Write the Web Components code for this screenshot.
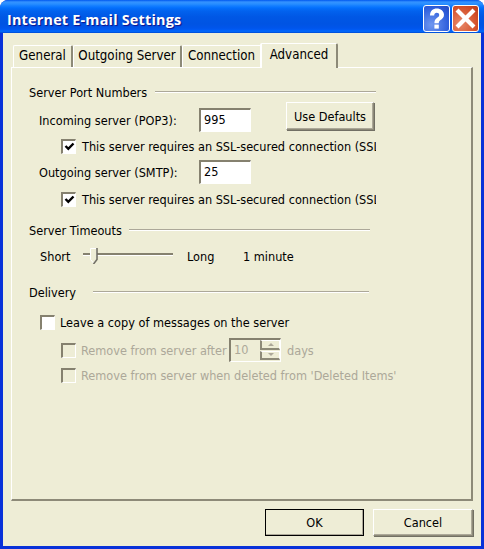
<!DOCTYPE html>
<html>
<head>
<meta charset="utf-8">
<title>Internet E-mail Settings</title>
<style>
html, body { margin: 0; padding: 0; background: #fff; }
body { width: 484px; height: 549px; overflow: hidden; font: 12.6px "DejaVu Sans Condensed", "DejaVu Sans", sans-serif; color: #000; }
.first { margin-top: 16px; }
.second { margin-top: 15px; }
.third { margin-top: 20px; }
</style>
</head>
<body>
<xp-window caption="Internet E-mail Settings">
  <xp-tabs>
    <xp-group class="first" label="Server Port Numbers" line="347" gap="8">
      <xp-row top="8" height="24" indent="10">
        <span style="width:160px">Incoming server (POP3):</span>
        <xp-field value="995" width="52"></xp-field>
        <xp-button label="Use Defaults" width="88" height="28" style="margin:-6px 0 0 35px;align-self:flex-start"></xp-button>
      </xp-row>
      <xp-row top="6" height="16" indent="32" clip="347">
        <xp-check checked></xp-check>
        <span class="long">This server requires an SSL-secured connection (SSL)</span>
      </xp-row>
      <xp-row top="6" height="24" indent="10">
        <span style="width:160px">Outgoing server (SMTP):</span>
        <xp-field value="25" width="52"></xp-field>
      </xp-row>
      <xp-row top="7" height="16" indent="32" clip="347">
        <xp-check checked></xp-check>
        <span class="long">This server requires an SSL-secured connection (SSL)</span>
      </xp-row>
    </xp-group>
    <xp-group class="second" label="Server Timeouts" line="341" gap="7">
      <xp-row top="10" height="16" indent="11">
        <span style="width:43px">Short</span>
        <xp-slider></xp-slider>
        <span style="margin-left:14px;width:56px">Long</span>
        <span>1 minute</span>
      </xp-row>
    </xp-group>
    <xp-group class="third" label="Delivery" line="340" gap="17">
      <xp-row top="14" height="16" indent="11">
        <xp-check></xp-check>
        <span style="margin-left:5px">Leave a copy of messages on the server</span>
      </xp-row>
      <xp-row top="8" height="24" indent="32" muted>
        <xp-check disabled></xp-check>
        <span style="margin-left:5px;width:148px;white-space:nowrap;overflow:hidden">Remove from server after</span>
        <xp-spinner value="10"></xp-spinner>
        <span style="margin-left:6px">days</span>
      </xp-row>
      <xp-row top="5" height="16" indent="32" muted>
        <xp-check disabled></xp-check>
        <span style="margin-left:5px">Remove from server when deleted from 'Deleted Items'</span>
      </xp-row>
    </xp-group>
  </xp-tabs>
  <xp-button slot="actions" label="OK" width="99" height="27" default></xp-button>
  <xp-button slot="actions" label="Cancel" width="100" height="27"></xp-button>
</xp-window>

<script>
class XpWindow extends HTMLElement {
    constructor() {
        super();
        this.shadowDOM = this.attachShadow({mode: "open"});
    }

    connectedCallback() {
        this.shadowDOM.innerHTML = `
        <style>
        :host { display: block; width: 484px; height: 549px; box-sizing: border-box; background: #0831d9; border-radius: 8px 8px 0 0; overflow: hidden; }
        .bar {
            height: 33px; box-sizing: border-box; display: flex; align-items: flex-start; padding: 5px 5px 0 7px;
            background: linear-gradient(to bottom, #0058ee 0, #3593ff 2px, #288eff 4px, #127dff 6px, #036ffc 8px, #0262ee 11px, #0057e5 17px, #0054e3 24px, #0055eb 28px, #005bf5 30px, #026afe 31px, #0062ef 32px, #0043cf 33px);
        }
        h1 { margin: 6px 0 0; flex: 1; font: bold 14.4px/18px "Open Sans", "DejaVu Sans", sans-serif; letter-spacing: .2px; color: #fff; text-shadow: 1px 1px 1px #0f1089; white-space: nowrap; }
        .ctl { width: 27px; height: 27px; box-sizing: border-box; border: 1px solid #fff; border-radius: 3px; display: block; flex: none; }
        .help { background: radial-gradient(circle at 30% 75%, #6f97f0, #2f5fdc 65%, #2348c0); }
        .close { background: radial-gradient(circle at 30% 70%, #e8896a, #d4512b 65%, #b8391a); margin-left: 2px; }
        .body { height: 513px; margin: 0 3px 3px; background: #eeedd6; display: flex; flex-direction: column; box-sizing: border-box; padding: 10px 8px 0 8px; }
        .actions { display: flex; justify-content: flex-end; gap: 9px; margin-top: 8px; }
        </style>
        <div class="bar">
            <h1>${this.getAttribute("caption")}</h1>
            <svg class="ctl help" viewBox="0 0 25 25"><path d="M6 9.500C6 5 9 2.500 12.800 2.500S20 5 20 8.800c0 3-2 4.200-3.500 5.300-1.300 1-1.700 1.700-1.700 3.200h-4.400c0-2.800.8-4 2.500-5.300 1.300-1 2.300-1.600 2.300-3 0-1.400-1-2.300-2.500-2.300s-2.500 1-2.500 2.800Z" fill="#fff"/><rect x="10.400" y="18.600" width="4.400" height="4" fill="#fff"/></svg>
            <svg class="ctl close" viewBox="0 0 25 25"><path d="M5.500 5.500l14 14M19.500 5.500l-14 14" stroke="#fff" stroke-width="4.200" stroke-linecap="square"/></svg>
        </div>
        <div class="body">
            <slot></slot>
            <div class="actions"><slot name="actions"></slot></div>
        </div>`;
    }
}
customElements.define("xp-window", XpWindow);

class XpTabs extends HTMLElement {
    constructor() {
        super();
        this.shadowDOM = this.attachShadow({mode: "open"});
    }

    connectedCallback() {
        const tabs = [["General", 60], ["Outgoing Server", 109], ["Connection", 80]];
        this.shadowDOM.innerHTML = `
        <style>
        :host { display: block; }
        .strip { display: flex; height: 24px; align-items: flex-end; padding-left: 2px; position: relative; z-index: 1; font-size: 13.200px; }
        .tab {
            height: 22px; box-sizing: border-box; text-align: center; line-height: 20px; white-space: nowrap;
            border-top: 1px solid #fff; border-left: 1px solid #fff; border-right: 2px solid #8d8a78; border-radius: 2px 2px 0 0;
        }
        .on { height: 25px; width: 78px; margin-left: -2px; margin-bottom: -1px; line-height: 21px; background: #eeedd6; border-left-width: 2px; }
        .panel {
            height: 434px; box-sizing: border-box; padding-left: 17px; background: #eeedd6;
            border-top: 1px solid #fff; border-left: 1px solid #fff; border-right: 2px solid #8d8a78; border-bottom: 2px solid #8d8a78;
        }
        </style>
        <div class="strip">
            ${tabs.map(t => `<div class="tab" style="width:${t[1]}px">${t[0]}</div>`).join("")}
            <div class="tab on">Advanced</div>
        </div>
        <div class="panel"><slot></slot></div>`;
    }
}
customElements.define("xp-tabs", XpTabs);

class XpGroup extends HTMLElement {
    constructor() {
        super();
        this.shadowDOM = this.attachShadow({mode: "open"});
    }

    connectedCallback() {
        this.shadowDOM.innerHTML = `
        <style>
        :host { display: block; }
        .head { display: flex; align-items: center; height: 16px; width: ${this.getAttribute("line")}px; white-space: nowrap; }
        .rule { flex: 1; height: 1px; background: #aca899; border-bottom: 1px solid #fff; margin-left: ${this.getAttribute("gap")}px; }
        </style>
        <div class="head"><span>${this.getAttribute("label")}</span><div class="rule"></div></div>
        <slot></slot>`;
    }
}
customElements.define("xp-group", XpGroup);

class XpRow extends HTMLElement {
    constructor() {
        super();
        this.shadowDOM = this.attachShadow({mode: "open"});
    }

    connectedCallback() {
        const clip = this.getAttribute("clip");
        this.shadowDOM.innerHTML = `
        <style>
        :host {
            display: flex; align-items: center; white-space: nowrap;
            margin-top: ${this.getAttribute("top")}px;
            height: ${this.getAttribute("height")}px;
            padding-left: ${this.getAttribute("indent")}px;
            ${clip ? `width: ${clip}px; box-sizing: border-box; overflow: hidden; gap: 6px;` : ""}
            ${this.hasAttribute("muted") ? "color: #aca899;" : ""}
        }
        </style>
        <slot></slot>`;
    }
}
customElements.define("xp-row", XpRow);

class XpCheck extends HTMLElement {
    constructor() {
        super();
        this.shadowDOM = this.attachShadow({mode: "open"});
    }

    connectedCallback() {
        const fill = this.hasAttribute("disabled") ? "#eeedd6" : "#fff";
        const mark = this.hasAttribute("checked")
            ? `<svg width="11" height="11" viewBox="0 0 11 11"><path d="M1.500 5l2.800 2.800L9.500 2.500" fill="none" stroke="#000" stroke-width="2.400"/></svg>`
            : "";
        this.shadowDOM.innerHTML = `
        <style>
        :host {
            display: flex; align-items: center; justify-content: center; flex: none;
            width: 15px; height: 15px; box-sizing: border-box; background: ${fill};
            border: 1px solid #fff; border-top: 2px solid #85816f; border-left: 2px solid #85816f;
        }
        </style>
        ${mark}`;
    }
}
customElements.define("xp-check", XpCheck);

class XpField extends HTMLElement {
    constructor() {
        super();
        this.shadowDOM = this.attachShadow({mode: "open"});
    }

    connectedCallback() {
        this.shadowDOM.innerHTML = `
        <style>
        :host {
            display: block; flex: none; height: 24px; box-sizing: border-box; width: ${this.getAttribute("width")}px;
            background: #fff; padding-left: 3px; line-height: 20px;
            border: 1px solid #fff; border-top: 2px solid #85816f; border-left: 2px solid #85816f;
        }
        </style>
        ${this.getAttribute("value")}`;
    }
}
customElements.define("xp-field", XpField);

class XpSpinner extends HTMLElement {
    constructor() {
        super();
        this.shadowDOM = this.attachShadow({mode: "open"});
    }

    connectedCallback() {
        this.shadowDOM.innerHTML = `
        <style>
        :host {
            display: flex; flex: none; width: 52px; height: 24px; box-sizing: border-box; color: #aca899;
            border: 1px solid #fff; border-top: 2px solid #85816f; border-left: 2px solid #85816f;
        }
        .val { flex: 1; padding-left: 3px; line-height: 20px; }
        .arrows { width: 20px; display: flex; flex-direction: column; gap: 1px; padding-bottom: 1px; }
        .arrows div { flex: 1; display: flex; align-items: center; justify-content: center; box-sizing: border-box; border-top: 1px solid #fff; border-left: 2px solid #8d8a78; border-right: 1px solid #fff; border-bottom: 2px solid #8d8a78; }
        i { display: block; width: 0; height: 0; border-left: 3px solid transparent; border-right: 3px solid transparent; }
        .up i { border-bottom: 3px solid #aca899; }
        .down i { border-top: 3px solid #aca899; }
        </style>
        <div class="val">${this.getAttribute("value")}</div>
        <div class="arrows"><div class="up"><i></i></div><div class="down"><i></i></div></div>`;
    }
}
customElements.define("xp-spinner", XpSpinner);

class XpSlider extends HTMLElement {
    constructor() {
        super();
        this.shadowDOM = this.attachShadow({mode: "open"});
    }

    connectedCallback() {
        this.shadowDOM.innerHTML = `
        <style>
        :host { display: block; flex: none; position: relative; width: 90px; height: 16px; }
        .track { position: absolute; left: 0; right: 0; top: 5px; height: 2px; background: #85816f; border-bottom: 1px solid #fff; }
        svg { position: absolute; left: 7px; top: 0; }
        </style>
        <div class="track"></div>
        <svg width="8" height="16" viewBox="0 0 8 16"><path d="M.5.5h6v11l-3 3.500-3-3.500z" fill="#eeedd6" stroke="#fff"/><path d="M7 0v11.500L3.500 16" fill="none" stroke="#716f64" stroke-width="1.600"/></svg>`;
    }
}
customElements.define("xp-slider", XpSlider);

class XpButton extends HTMLElement {
    constructor() {
        super();
        this.shadowDOM = this.attachShadow({mode: "open"});
    }

    connectedCallback() {
        const isDefault = this.hasAttribute("default");
        this.shadowDOM.innerHTML = `
        <style>
        :host {
            display: flex; flex: none; align-items: center; justify-content: center; box-sizing: border-box;
            width: ${this.getAttribute("width")}px; height: ${this.getAttribute("height")}px;
            background: #eeedd6; white-space: nowrap;
            border: 1px solid ${isDefault ? "#000" : "#fff"};
            box-shadow: inset -1px -1px 0 #aca899${isDefault ? "" : ", 1px 1px 0 #716f64"};
            ${isDefault ? "" : "border-right-color: #8d8a78; border-bottom-color: #8d8a78;"}
        }
        </style>
        ${this.getAttribute("label")}`;
    }
}
customElements.define("xp-button", XpButton);
</script>
</body>
</html>
